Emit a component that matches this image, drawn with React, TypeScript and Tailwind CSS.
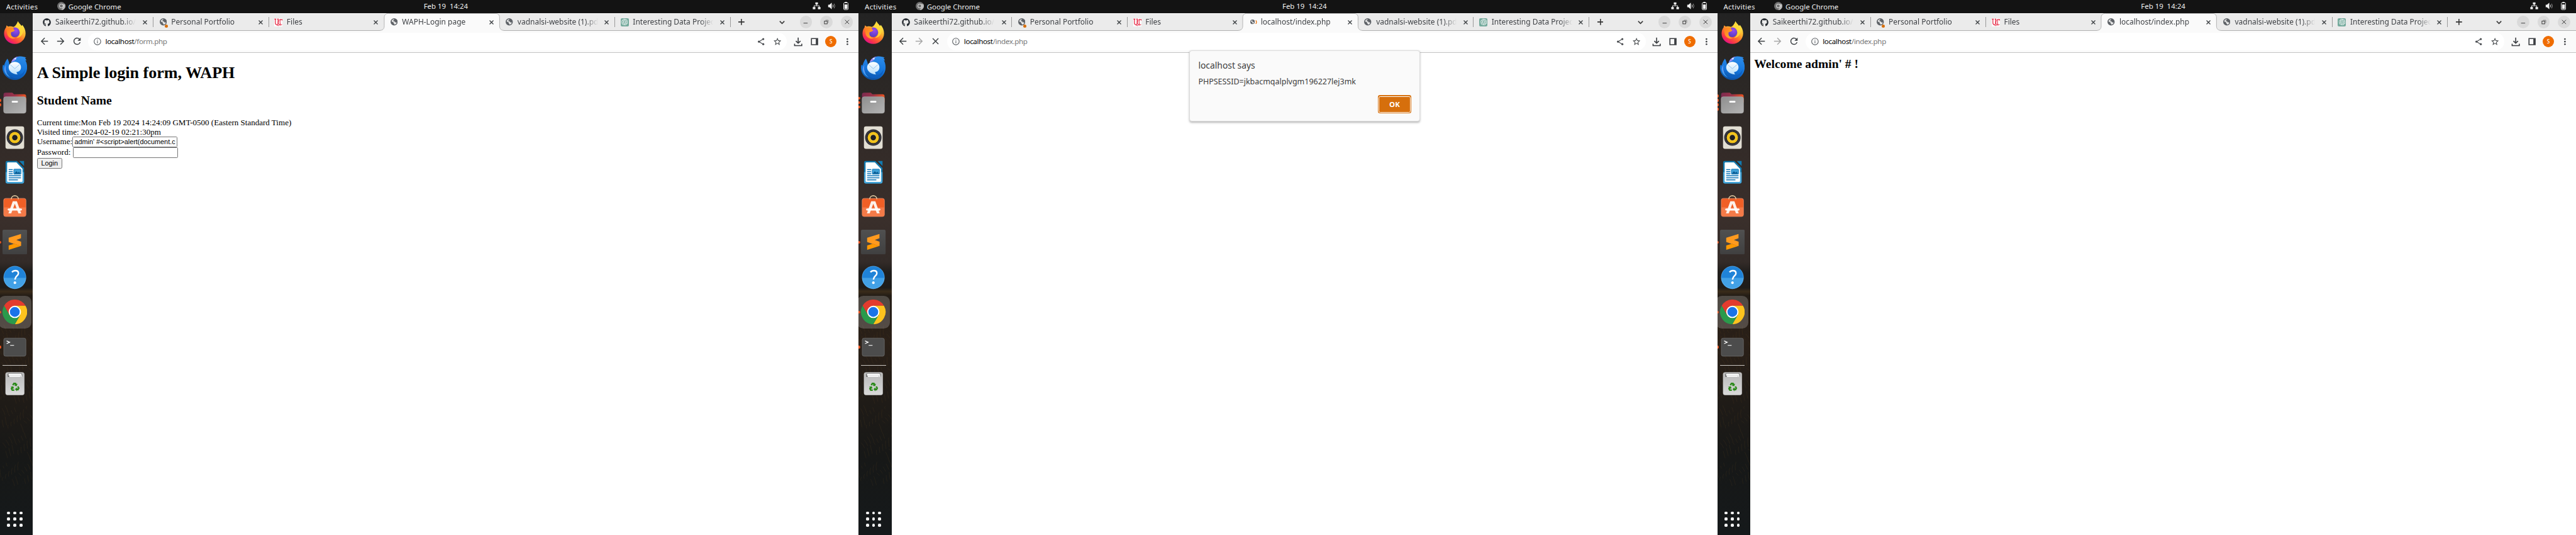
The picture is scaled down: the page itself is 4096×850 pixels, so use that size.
import React from "react";
import { FaGithub } from "react-icons/fa";
import { SiOpenai } from "react-icons/si";
import { MdArrowBack, MdArrowForward, MdRefresh, MdClose, MdOutlineInfo, MdStarBorder } from "react-icons/md";

/* ---------- dock icons (48 x 48 artboards) ---------- */

function FirefoxIcon() {
  return (
    <svg viewBox="0 0 48 48" className="size-12">
      <defs>
        <linearGradient id="ffBody" x1="0.8" y1="0.1" x2="0.25" y2="0.95">
          <stop offset="0" stopColor="#fff14f" />
          <stop offset="0.35" stopColor="#ffb22e" />
          <stop offset="0.62" stopColor="#ff6a2b" />
          <stop offset="0.85" stopColor="#f8324c" />
          <stop offset="1" stopColor="#e3108a" />
        </linearGradient>
        <linearGradient id="ffHead" x1="0" y1="0" x2="1" y2="1">
          <stop offset="0" stopColor="#ff7a1e" />
          <stop offset="1" stopColor="#ffb52e" />
        </linearGradient>
        <radialGradient id="ffGlobe" cx="0.6" cy="0.3" r="0.8">
          <stop offset="0" stopColor="#9a4bf0" />
          <stop offset="1" stopColor="#4b3bb5" />
        </radialGradient>
      </defs>
      <path d="M30 1c1.500 3.500 4.500 6 7 9 .8-.4 1.200-1.200 1.500-2 4 4.500 6.500 10.500 6.500 16.500C45 36 35.500 45 24 45S3 36 3 25c0-5 1.500-9 4-12 0-1.500.4-3 1.200-4.200.8 1.200 2 2 3.300 2.500 3.500-.9 6.500-.6 9.500.7 4.500-1.500 7-6 9-11z" fill="url(#ffBody)" />
      <path d="M30 1c1.500 3.500 4.500 6 7 9 3.500 4.500 4 9 2.500 14-3 7-8 9.500-13 9.500 6-2.500 8-7 7-12-1.500-4-5-6.500-10.500-8 4-2.500 6-7 7-12.500z" fill="#ffd93a" opacity="0.9" />
      <circle cx="24" cy="22.500" r="9.500" fill="url(#ffGlobe)" />
      <path d="M8 16c3-2.500 8-3.500 13-2.500 1 1.500 1 2.500.5 3.500l2.500 1.500c-2 3-5 3.500-7 3.500-.8 2-.8 5 .5 7.500 2 3 5 4.500 8.500 4-7 3-14 0-16.500-6.500C8.500 23 7.500 19.500 8 16z" fill="url(#ffHead)" />
    </svg>
  );
}

function ThunderbirdIcon() {
  return (
    <svg viewBox="0 0 48 48" className="size-12">
      <defs>
        <linearGradient id="tbBody" x1="0.6" y1="0" x2="0.4" y2="1">
          <stop offset="0" stopColor="#2b8bea" />
          <stop offset="0.6" stopColor="#1373d9" />
          <stop offset="1" stopColor="#0c4f9f" />
        </linearGradient>
        <linearGradient id="tbMail" x1="0" y1="0" x2="0" y2="1">
          <stop offset="0" stopColor="#ffffff" />
          <stop offset="1" stopColor="#b9dffb" />
        </linearGradient>
      </defs>
      <path d="M17 14c2-7 7-11 14-12 6-.8 12 .5 15.500 2.500l-2.500.5 3 5-2.500-.5c2.500 4 3.500 9 3.500 14C48 37 37 48 24 48 11 48 0 37 0 25c0-3 .3-5 1-7l2 2c1-4 3-9 6.500-13.500 2 2.500 3.500 7 4 12z" fill="url(#tbBody)" />
      <path d="M17 13.500c2-6.500 7-10.500 14-11.500-4 2-6 5-6.500 7.500z" fill="#a58bf2" />
      <path d="M6 19c-1 10 2 19 10 24-7-1.500-12-8-13-15 0-3 1-6 3-9z" fill="#3f9df0" />
      <path d="M7 18c-2 6-1 13 2 18-4-5-5-12-2-18z" fill="#a58bf2" />
      <path d="M20 39c10 3 20-1 24-12-1 12-10 18-20 17-4-.5-7-2-8-3z" fill="#0d5fc0" />
      <circle cx="25" cy="6.500" r="1.600" fill="#d9f1ff" />
      <path d="M12 24c0-7 5-11.500 12-11.500S36 17 36 23c0 6-4 9-8.500 9.500 0 1.500.5 3 2 4.500C20 37 12 31 12 24z" fill="url(#tbMail)" />
      <path d="M15 18l9 8 9-8" fill="none" stroke="#8fc3ee" strokeWidth="1.200" />
    </svg>
  );
}

function FilesIcon() {
  return (
    <svg viewBox="0 0 48 48" className="size-12">
      <defs>
        <linearGradient id="flBack" x1="0" y1="0" x2="1" y2="0">
          <stop offset="0" stopColor="#7c2b50" />
          <stop offset="0.5" stopColor="#9c3348" />
          <stop offset="1" stopColor="#e95420" />
        </linearGradient>
        <linearGradient id="flFront" x1="0" y1="0" x2="1" y2="1">
          <stop offset="0" stopColor="#8e8e8e" />
          <stop offset="1" stopColor="#b4b4b4" />
        </linearGradient>
      </defs>
      <path d="M2 8q0-4 4-4h13l3.500 3H42q4 0 4 4v12H2z" fill="url(#flBack)" />
      <rect x="2.200" y="12" width="43.600" height="32" rx="4" fill="url(#flFront)" stroke="#a9a9a9" strokeWidth="0.800" />
      <rect x="18" y="20" width="12" height="3.200" rx="1.200" fill="#fff" />
    </svg>
  );
}

function RhythmboxIcon() {
  return (
    <svg viewBox="0 0 48 48" className="size-12">
      <rect x="5.800" y="2" width="36.400" height="44" rx="4" fill="#e2ded3" />
      <circle cx="24" cy="24" r="16" fill="#2c2c32" />
      <circle cx="24" cy="24" r="14" fill="#44444e" />
      <circle cx="24" cy="24" r="13" fill="#26262b" />
      <circle cx="24" cy="24" r="11" fill="#f2c21a" />
      <circle cx="24" cy="24" r="6.500" fill="#f7d046" />
      <circle cx="24" cy="24" r="5.300" fill="#1f1f22" />
    </svg>
  );
}

function WriterIcon() {
  return (
    <svg viewBox="0 0 48 48" className="size-12">
      <path d="M9 2h19l14 14v27q0 3-3 3H9q-3 0-3-3V5q0-3 3-3z" fill="#1279ae" />
      <path d="M6 24h36v19q0 3-3 3H9q-3 0-3-3z" fill="#45a5d8" />
      <path d="M10.500 5H27l12 12.500V41q0 2-2 2H11q-2 0-2-2V6.500q0-1.500 1.500-1.500z" fill="#fff" />
      <path d="M32.500 2H42v10z" fill="#1279ae" />
      <path d="M12 19h8M12 23h8M12 27h8M12 31h24M12 35h24M12 39h18" stroke="#0b74b8" strokeWidth="1.800" />
      <rect x="22" y="18" width="14" height="10" rx="1" fill="#3e9fd5" stroke="#0b74b8" strokeWidth="1" />
      <path d="M23 27l4-5 3 3 2-2 3 4z" fill="#0a5b93" />
    </svg>
  );
}

function SoftwareIcon() {
  return (
    <svg viewBox="0 0 48 48" className="size-12">
      <rect x="2.200" y="6.300" width="43.600" height="35.500" rx="4" fill="#f05f26" stroke="#f5a17f" strokeWidth="0.700" />
      <path d="M2.500 24h43v14q0 3.600-4 3.600h-35q-4 0-4-3.600z" fill="#f47a48" />
      <path d="M17 8c0-4 3-6.800 7-6.800S31 4 31 8" fill="none" stroke="#f6dcae" strokeWidth="1.600" />
      <path d="M20 12h8l8.500 23.500H31L24 17l-7 18.500h-5.500z" fill="#fdf1ea" />
      <rect x="10" y="26" width="28" height="4" rx="2" fill="#fff" />
    </svg>
  );
}

function SublimeIcon() {
  return (
    <svg viewBox="0 0 48 48" className="size-12">
      <defs>
        <linearGradient id="stBg" x1="0" y1="0" x2="0" y2="1">
          <stop offset="0" stopColor="#505050" />
          <stop offset="1" stopColor="#404040" />
        </linearGradient>
      </defs>
      <rect width="48" height="48" rx="2.500" fill="url(#stBg)" />
      <path d="M12 24l24 7.700L12 39.300v-8.500l10-3.300z" fill="#ff9800" />
      <path d="M24 27.700L36 23v8.700z" fill="#e98a0a" />
      <path d="M36 8.400v8.100l-9 3.300 9 3.400v8.500L12 24v-8.400z" fill="#ff9a1f" />
    </svg>
  );
}

function HelpIcon() {
  return (
    <svg viewBox="0 0 48 48" className="size-12">
      <circle cx="24" cy="24" r="21.800" fill="#1f83d8" />
      <path d="M2.200 25a21.800 21.800 0 0 0 43.600 0z" fill="#42a1e6" />
      <circle cx="24" cy="24" r="21.600" fill="none" stroke="#6bb6ee" strokeWidth="0.700" />
      <path d="M18.500 14c1.500-2 3.700-3 6.500-3 3.800 0 6 2.200 6 5.200 0 4.800-6.500 5.500-6.500 11.300v1" fill="none" stroke="#fff" strokeWidth="3" />
      <circle cx="24.200" cy="34.500" r="2.500" fill="#fff" />
    </svg>
  );
}

function ChromeIcon() {
  return (
    <svg viewBox="0 0 48 48" className="size-12">
      <path d="M24 12h20.800A24 24 0 0 0 3.200 12l10.400 18z" fill="#e33b2e" />
      <path d="M34.400 30L24 48A24 24 0 0 0 44.800 12H24z" fill="#fcc31e" />
      <path d="M13.600 30L3.200 12A24 24 0 0 0 24 48l10.400-18z" fill="#2a9a4b" />
      <circle cx="24" cy="24" r="12" fill="#fff" />
      <circle cx="24" cy="24" r="9.600" fill="#1a73e8" />
    </svg>
  );
}

function TerminalIcon() {
  return (
    <svg viewBox="0 0 48 48" className="size-12">
      <rect x="2.400" y="6.400" width="43.200" height="35.200" rx="3.600" fill="#4c4c4c" stroke="#6e6e6e" strokeWidth="0.900" />
      <path d="M8 11.800l6 2.700-6 2.700" fill="none" stroke="#fff" strokeWidth="1.500" />
      <path d="M15 20.500h7.500" stroke="#fff" strokeWidth="1.300" />
    </svg>
  );
}

function TrashIcon() {
  return (
    <svg viewBox="0 0 48 48" className="size-12">
      <defs>
        <linearGradient id="trBody" x1="0" y1="0" x2="0" y2="1">
          <stop offset="0" stopColor="#b9b9b9" />
          <stop offset="1" stopColor="#d9d9d9" />
        </linearGradient>
      </defs>
      <rect x="6" y="2" width="36.400" height="44" rx="3.600" fill="url(#trBody)" stroke="#d8d8d8" strokeWidth="0.600" />
      <path d="M10 6q0-2 2-2h24q2.500 0 2.500 2v3q0 2-2 2H11.500q-1.500 0-1.500-2z" fill="#6a6a6a" />
      <path d="M11.500 6q0-1.500 1.500-1.500h22q2.500 0 2.500 2V11H35V8.500H12z" fill="#fafafa" />
      <path d="M13 8h22v3H13z" fill="#fff" stroke="#b5b5b5" strokeWidth="0.500" />
      <g transform="translate(24.300 31)" fill="#2c8a1b">
        {[0, 120, 240].map((a) => (
          <g key={a} transform={`rotate(${a})`}>
            <path d="M-5.500-4.500L-3-8.800h4.800l1.700 2.600 1.600-.9-1.800 5-5-.6 1.600-1L-1-6.500l-1.500 3.200z" />
          </g>
        ))}
      </g>
    </svg>
  );
}

function DockItem({ children, windows = 0, active = false }: { children: React.ReactNode; windows?: number; active?: boolean }) {
  return (
    <div className="relative flex h-[68px] w-full shrink-0 items-center">
      <div className={active ? "-ml-[3px] flex size-16 shrink-0 items-center justify-center rounded-[12px] bg-white/20" : "ml-[5px] size-12"}>
        {children}
      </div>
      {windows > 0 && (
        <div className="absolute -left-[2.500px] top-0 flex h-full flex-col items-center justify-center gap-[3.200px]">
          {Array.from({ length: windows }, (_, i) => (
            <span key={i} className="size-[5.500px] rounded-full bg-[#e95420]" />
          ))}
        </div>
      )}
    </div>
  );
}

function Grass() {
  const strokes = Array.from({ length: 120 }, (_, i) => {
    const x = (i * 37) % 66;
    const y = (i * 53) % 320;
    const dx = ((i * 7) % 9) - 3;
    const dy = 5 + ((i * 11) % 14);
    return `M${x} ${y}q${dx} ${dy / 2} ${dx + 2} ${dy}`;
  });
  return (
    <svg className="absolute left-0 top-[590px] h-[330px] w-16" viewBox="0 0 64 330">
      <path d={strokes.join("")} fill="none" stroke="#6b4a22" strokeWidth="0.900" opacity="0.24" />
    </svg>
  );
}

function Dock({ fileWindows }: { fileWindows: number }) {
  return (
    <aside className="relative flex w-16 shrink-0 flex-col overflow-hidden bg-[linear-gradient(to_bottom,#232323_0px,#2a2725_120px,#332b28_260px,#3a2f2b_400px,#332b28_485px,#201e1c_505px,#1f1c19_535px,#3a2c1a_542px,#241d16_550px,#2a2018_640px,#1f1b17_760px,#171817_860px,#15191b_1016px)] pt-1">
      <Grass />
      <DockItem><FirefoxIcon /></DockItem>
      <DockItem><ThunderbirdIcon /></DockItem>
      <DockItem windows={fileWindows}><FilesIcon /></DockItem>
      <DockItem><RhythmboxIcon /></DockItem>
      <DockItem><WriterIcon /></DockItem>
      <DockItem><SoftwareIcon /></DockItem>
      <DockItem windows={1}><SublimeIcon /></DockItem>
      <DockItem><HelpIcon /></DockItem>
      <DockItem windows={1} active><ChromeIcon /></DockItem>
      <DockItem windows={1}><TerminalIcon /></DockItem>
      <div className="relative my-px ml-[5px] h-px w-12 shrink-0 bg-[#c9c5c1]" />
      <DockItem><TrashIcon /></DockItem>
      <div className="relative mb-4 ml-3.5 mt-auto grid w-fit grid-cols-3 gap-1.5">
        {Array.from({ length: 9 }, (_, i) => (
          <span key={i} className="size-1.5 rounded-[2px] bg-[#f2f2f2]" />
        ))}
      </div>
    </aside>
  );
}

/* ---------- top bar ---------- */

function TopBar() {
  return (
    <header className="grid h-[26px] shrink-0 grid-cols-[826px_auto_1fr] items-center bg-[#131313] text-[14px] leading-[24px] text-[#f0f0f0]">
      <div className="flex items-center pl-3">
        <span className="w-[99px] tracking-[0.350px]">Activities</span>
        <svg viewBox="0 0 16 16" className="-mt-0.5 mr-1.5 size-4">
          <circle cx="8" cy="8" r="8" fill="#6f6f6f" />
          <path d="M8 4.200h7A8 8 0 0 1 8 16l3.400-6z" fill="#b9b9b9" />
          <circle cx="8" cy="8" r="4.200" fill="#dcdcdc" />
          <circle cx="8" cy="8" r="3" fill="#6f6f6f" />
        </svg>
        <span>Google Chrome</span>
      </div>
      <span className="-mt-0.5 whitespace-pre">Feb 19  14:24</span>
      <div className="-mt-0.5 flex items-center justify-end gap-3.5 pr-5">
        <svg viewBox="0 0 16 16" className="size-4" fill="#f0f0f0">
          <rect x="5.500" y="1" width="5" height="4" />
          <rect x="0.500" y="10" width="5" height="4.300" />
          <rect x="10.500" y="10" width="5" height="4.300" />
          <path d="M8 4v3.500M3 10.500v-3h10v3" fill="none" stroke="#f0f0f0" strokeWidth="1.200" />
        </svg>
        <svg viewBox="0 0 16 16" className="size-4" fill="#f0f0f0">
          <path d="M1 5.500h2.500L8 1.500v13l-4.500-4H1z" />
          <path d="M10 5.500q2 2.500 0 5" fill="none" stroke="#f0f0f0" strokeWidth="1.200" />
          <path d="M12.500 3.500q3.200 4.500 0 9" fill="none" stroke="#9a9a9a" strokeWidth="1.200" />
        </svg>
        <svg viewBox="0 0 10 16" className="h-4 w-2.5" fill="#f0f0f0">
          <path d="M3 0h4v1.500H3z" />
          <rect x="0.700" y="1.700" width="8.600" height="13.400" rx="1.500" fill="none" stroke="#f0f0f0" strokeWidth="1.200" />
          <rect x="2.200" y="5" width="5.600" height="8.600" />
        </svg>
      </div>
    </header>
  );
}

/* ---------- favicons ---------- */

function Globe({ className = "size-3.5" }: { className?: string }) {
  return (
    <svg viewBox="0 0 14 14" className={className}>
      <circle cx="7" cy="7" r="7" fill="#5f6368" />
      <path d="M2 5.800C2.500 3.500 4.500 2 6.800 1.800c.6.600.2 1.400-.8 1.700-.6.300-.4 1-.4 1.500H4.500c.2.800 1 .8 2.500.8 1.300.2 1.300 1.200 1.400 2.200h2c.8 0 1.200.6 1.400 1.200-.8 1.600-2.300 2.800-4.300 3 0-1-.3-1.800-1-2.200-.9-.5-.8-1.500-.5-2.200C5 7.500 3.300 7.500 2 5.800z" fill="#ebebeb" />
    </svg>
  );
}

function Favicon({ kind }: { kind: string }) {
  if (kind === "github") return <FaGithub className="size-4 text-[#24292f]" />;
  if (kind === "uc")
    return (
      <svg viewBox="0 0 16 16" className="size-4">
        <rect width="16" height="16" fill="#fff" />
        <path d="M0.300 1.500h3.700M2.300 1.500v7.500q0 3.500 2.700 4M5.800 1.500h3M7.500 1.500v8q0 3-2 3.500" fill="none" stroke="#e00122" strokeWidth="1.300" />
        <path d="M15.400 4.500V1.700M15.400 2.600q-4-1.800-6.500 1.700-2.200 4 0 7.500 2.300 3 6.300.5M12.500 2q-2.500 4.500-.5 11M5 13q3.500 3 5.500-.5" fill="none" stroke="#e00122" strokeWidth="1.100" />
      </svg>
    );
  if (kind === "openai")
    return (
      <span className="flex size-4 items-center justify-center rounded-[2.500px] bg-[#74aa9c]">
        <SiOpenai className="size-[12.500px] text-white" />
      </span>
    );
  if (kind === "audible")
    return (
      <span className="relative flex size-4 items-center justify-center">
        <Globe />
        <span className="absolute -bottom-[3px] -right-px size-1.5 rounded-full bg-[#d66f0c]" />
      </span>
    );
  if (kind === "loading")
    return (
      <span className="flex size-4 items-center gap-[1.500px] pl-[3px]">
        <Globe className="size-[9px] shrink-0" />
        <svg viewBox="0 0 4 8" className="h-2 w-1 shrink-0">
          <path d="M1 .5q2.500 3.500 0 7" fill="none" stroke="#e8710a" strokeWidth="1.600" />
        </svg>
      </span>
    );
  return (
    <span className="flex size-4 items-center justify-center">
      <Globe />
    </span>
  );
}

/* ---------- browser chrome ---------- */

function TabClose() {
  return (
    <svg viewBox="0 0 16 16" className="relative size-4 shrink-0">
      <path d="M4.300 4.300l7.400 7.400M11.700 4.300l-7.400 7.400" stroke="#3c4043" strokeWidth="1.600" />
    </svg>
  );
}

function Tab({ icon, title, active = false, first = false, noSep = false }: { icon: string; title: string; active?: boolean; first?: boolean; noSep?: boolean }) {
  return (
    <div className={`relative flex w-[225px] shrink-0 items-center ${first ? "pl-2.5" : "pl-[11px]"} ${active ? "z-10" : ""}`}>
      {active && (
        <svg viewBox="0 0 242 34" className="absolute -left-[9px] -top-px h-[34px] w-[242px]">
          <path d="M0 33.500c5 0 8.500-3 8.500-8V8.500c0-5 3-8 8-8h209c5 0 8 3 8 8v17c0 5 3.500 8 8.500 8V35H0z" fill="#fafafa" />
          <path d="M0 33.500c5 0 8.500-3 8.500-8V8.500c0-5 3-8 8-8h209c5 0 8 3 8 8v17c0 5 3.500 8 8.500 8" fill="none" stroke="#a8a8a8" />
        </svg>
      )}
      <span className="relative size-4 shrink-0">
        <Favicon kind={icon} />
      </span>
      <span className="relative ml-2 w-[158px] overflow-hidden whitespace-nowrap text-[14.700px] leading-[24px] text-[#3f4246] [mask-image:linear-gradient(to_right,#000_132px,transparent_157px)]">
        {title}
      </span>
      <span className={`relative flex ${first ? "ml-[9px]" : "ml-2"}`}>
        <TabClose />
      </span>
      {!active && !noSep && <span className="ml-auto h-5 w-px bg-[#9a9a9a]" />}
    </div>
  );
}

function WindowButton({ children }: { children: React.ReactNode }) {
  return (
    <span className="flex size-6 items-center justify-center rounded-full bg-[#dadada]">
      <svg viewBox="0 0 12 12" className="size-3" fill="none" stroke="#3c3c3c" strokeWidth="1.200">
        {children}
      </svg>
    </span>
  );
}

function TabStrip({ title, icon }: { title: string; icon: string }) {
  return (
    <div className="flex h-[34px] shrink-0 border-b border-t border-b-[#b0b0b0] border-t-white bg-[#ebebeb] pl-2.5 pr-[11px]">
      <Tab icon="github" title="Saikeerthi72.github.io/i" first />
      <Tab icon="audible" title="Personal Portfolio" />
      <Tab icon="uc" title="Files" noSep />
      <Tab icon={icon} title={title} active />
      <Tab icon="globe" title="vadnalsi-website (1).pdf" />
      <Tab icon="openai" title="Interesting Data Project" />
      <div className="flex w-11 items-center justify-center">
        <svg viewBox="0 0 12 12" className="size-3">
          <path d="M6 0v12M0 6h12" stroke="#333" strokeWidth="1.900" />
        </svg>
      </div>
      <div className="ml-auto flex items-center gap-4">
        <svg viewBox="0 0 16 16" className="mr-[11px] size-4">
          <path d="M3.500 5.700L8 10.200l4.500-4.500" fill="none" stroke="#3c3c3c" strokeWidth="2" />
        </svg>
        <WindowButton><path d="M2 8.300h8" /></WindowButton>
        <WindowButton>
          <rect x="2.300" y="4.300" width="5.400" height="5.400" />
          <path d="M4.500 2.500h5.300v5.300" stroke="#777" strokeWidth="1" />
        </WindowButton>
        <WindowButton><path d="M2 2l8 8M10 2l-8 8" /></WindowButton>
      </div>
    </div>
  );
}

function Toolbar({ path, canForward = false, loading = false }: { path: string; canForward?: boolean; loading?: boolean }) {
  return (
    <div className="flex h-[43px] shrink-0 items-center gap-3 border-b border-[#c4c4c4] bg-[#fafafa] px-3 text-[#3c4043]">
      <MdArrowBack className="-mx-[0.500px] size-[21px] shrink-0" />
      <MdArrowForward className={`-mx-[0.500px] size-[21px] shrink-0 ${canForward ? "" : "text-[#a6a6a6]"}`} />
      {loading ? <MdClose className="-mx-[0.500px] size-[21px] shrink-0" /> : <MdRefresh className="-mx-[0.500px] size-[21px] shrink-0" />}
      <div className="flex h-[34px] flex-1 items-center rounded-full bg-white px-2">
        <MdOutlineInfo className="ml-[1.500px] mr-[7px] size-[17px] shrink-0 text-[#5f6368]" />
        <span className="text-[14.200px] leading-[24px] tracking-[-0.430px] text-[#777]">
          <span className="text-black">localhost</span>
          {path}
        </span>
        <svg viewBox="0 0 20 20" className="ml-auto mr-3 size-5 shrink-0" fill="#4a4d51">
          <path d="M14 5L6 10l8 5" fill="none" stroke="#4a4d51" strokeWidth="1.400" />
          <circle cx="14.300" cy="5" r="2" />
          <circle cx="5.700" cy="10" r="2" />
          <circle cx="14.300" cy="15" r="2" />
        </svg>
        <MdStarBorder className="size-5 shrink-0 scale-[0.900] text-[#3c4043]" />
      </div>
      <svg viewBox="0 0 20 20" className="size-5 shrink-0" fill="none" stroke="#3c3f43" strokeWidth="2">
        <path d="M10 2v11M5.500 8.800L10 13l4.500-4.200M3 14v3.800h14V14" />
      </svg>
      <svg viewBox="0 0 20 20" className="size-5 shrink-0">
        <path d="M3 3h14v14H3zM5 5v10h7.500V5z" fill="#3c3f43" fillRule="evenodd" />
      </svg>
      <span className="-mx-px flex size-[22px] shrink-0 items-center justify-center rounded-full bg-[#ef6c00] text-[10px] font-medium leading-none text-white">S</span>
      <svg viewBox="0 0 20 20" className="size-5 shrink-0" fill="#3c3f43">
        <circle cx="10.300" cy="5" r="1.600" />
        <circle cx="10.300" cy="10" r="1.600" />
        <circle cx="10.300" cy="15" r="1.600" />
      </svg>
    </div>
  );
}

/* ---------- pages ---------- */

function LoginPage() {
  return (
    <div className="px-2 font-['Liberation_Serif',serif] text-[16px] leading-[18px] text-black">
      <h1 className="mt-[21px] text-[32px] font-bold leading-[37px]">A Simple login form, WAPH</h1>
      <h2 className="mt-[22px] text-[24px] font-bold leading-[27px]">Student Name</h2>
      <div className="mt-[21px]">Current time:Mon Feb 19 2024 14:24:09 GMT-0500 (Eastern Standard Time)</div>
      <div>Visited time: 2024-02-19 02:21:30pm</div>
      <div className="-mt-px flex h-[21px] items-center">
        <span className="w-[69px]">Username:</span>
        <span className="flex h-[21px] w-[205px] items-center overflow-hidden whitespace-nowrap rounded-[2px] border border-[#767676] bg-white px-[3px] font-['Liberation_Sans',sans-serif] text-[13.333px]">
          admin' #&lt;script&gt;alert(document.c
        </span>
      </div>
      <div className="flex h-[21px] items-center">
        <span className="w-[70px]">Password:</span>
        <span className="h-[21px] w-[205px] rounded-[2px] border border-[#767676] bg-white" />
      </div>
      <button className="flex h-[21px] w-[49px] items-center justify-center rounded-[3px] border border-[#767676] bg-[#efefef] font-['Liberation_Sans',sans-serif] text-[13.333px]">
        Login
      </button>
    </div>
  );
}

function WelcomePage() {
  return (
    <h2 className="px-2 pt-2 font-['Liberation_Serif',serif] text-[24px] font-bold leading-[27px] text-black">Welcome admin' # !</h2>
  );
}

function AlertDialog() {
  return (
    <div className="absolute left-[645px] top-[98px] z-20 flex h-[139px] w-[449px] flex-col rounded-[5px] border border-[#dcdcdc] bg-[#fafafa] px-4 pt-[15px] text-[#3c3c3c] shadow-[0_2px_4px_rgba(0,0,0,0.28)]">
      <div className="text-[17px] leading-[26px]">localhost says</div>
      <div className="mt-[7px] text-[15.300px] leading-[24px]">PHPSESSID=jkbacmqalplvgm196227lej3mk</div>
      <button className="ml-auto mr-[-1px] mt-[14px] flex h-9 w-[66px] items-center justify-center rounded-[4px] bg-[#d66f0c] p-[2px] text-[14px] font-bold text-white">
        <span className="flex size-full items-center justify-center rounded-[3px] border border-white">OK</span>
      </button>
    </div>
  );
}

function Desktop({ fileWindows, tabTitle, tabIcon = "globe", path, canForward, loading, children }: {
  fileWindows: number;
  tabTitle: string;
  tabIcon?: string;
  path: string;
  canForward?: boolean;
  loading?: boolean;
  children?: React.ReactNode;
}) {
  return (
    <section className="relative flex h-full w-[1674px] shrink-0 flex-col">
      <TopBar />
      <div className="flex min-h-0 flex-1">
        <Dock fileWindows={fileWindows} />
        <main className="flex min-w-0 flex-1 flex-col bg-white">
          <TabStrip title={tabTitle} icon={tabIcon} />
          <Toolbar path={path} canForward={canForward} loading={loading} />
          {!loading && children}
        </main>
      </div>
      {loading && children}
    </section>
  );
}

export default function App() {
  return (
    <div className="h-[850px] w-[4096px] overflow-hidden bg-white font-['Noto_Sans',sans-serif]">
      <div className="flex h-[1042.200px] w-[5022px] [zoom:0.8156]">
        <Desktop fileWindows={2} tabTitle="WAPH-Login page" path="/form.php" canForward>
          <LoginPage />
        </Desktop>
        <Desktop fileWindows={3} tabTitle="localhost/index.php" tabIcon="loading" path="/index.php" loading>
          <AlertDialog />
        </Desktop>
        <Desktop fileWindows={4} tabTitle="localhost/index.php" path="/index.php">
          <WelcomePage />
        </Desktop>
      </div>
    </div>
  );
}
